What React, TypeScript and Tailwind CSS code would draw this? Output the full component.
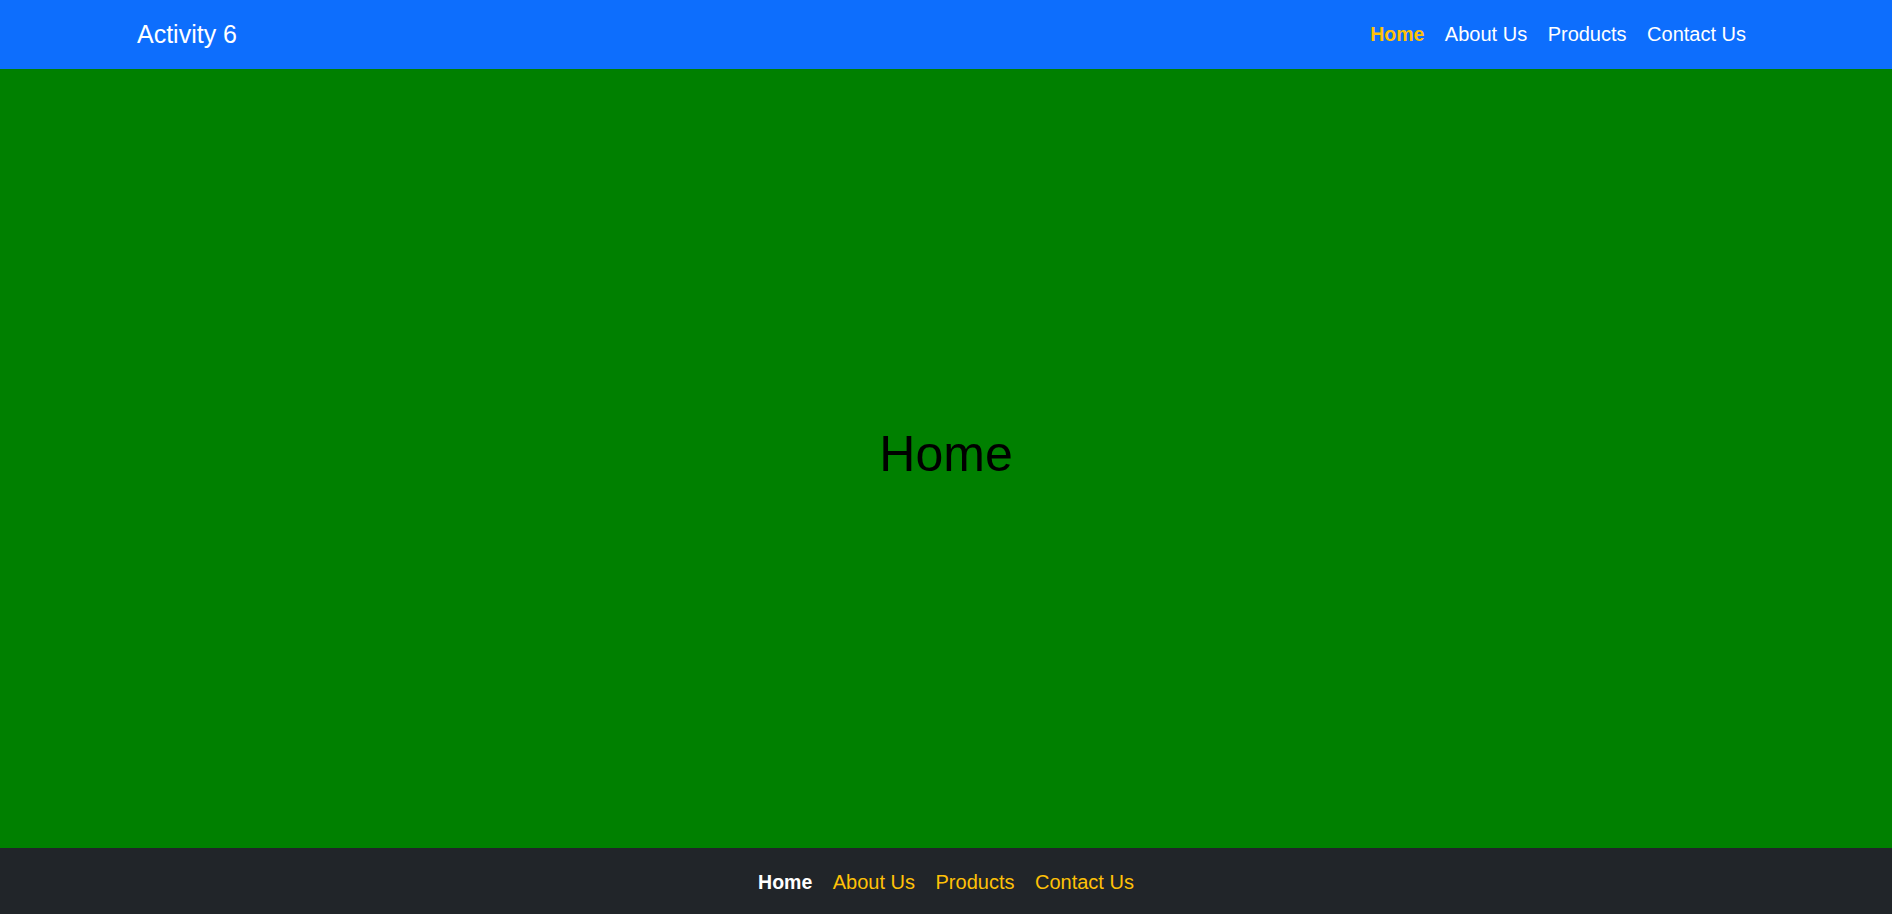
const links = ["Home", "About Us", "Products", "Contact Us"];

export default function App() {
  const active = "Home";

  return (
    <div
      className="flex flex-col h-[914px] w-full"
      style={{ fontFamily: '"Liberation Sans", Arial, sans-serif' }}
    >
      <header className="h-[69px] shrink-0 bg-[#0d6efd] flex items-center justify-between pl-[137px] pr-[146px]">
        <span className="text-[25px] text-white leading-none">Activity 6</span>
        <nav className="flex items-baseline gap-[20.5px] text-[20px] leading-none">
          {links.map((l) => (
            <a
              key={l}
              className={
                l === active
                  ? "font-bold text-[19.5px] text-[#ffc107]"
                  : "text-white"
              }
            >
              {l}
            </a>
          ))}
        </nav>
      </header>

      <main className="flex-1 bg-[#008000] flex items-center justify-center">
        <h1 className="text-[50px] text-black mb-2">Home</h1>
      </main>

      <footer className="h-[66px] shrink-0 bg-[#212529] flex items-center justify-center pt-[2px]">
        <nav className="flex items-baseline gap-[20.5px] text-[20px] leading-none">
          {links.map((l) => (
            <a
              key={l}
              className={
                l === active
                  ? "font-bold text-[19.5px] text-white"
                  : "text-[#ffc107]"
              }
            >
              {l}
            </a>
          ))}
        </nav>
      </footer>
    </div>
  );
}
